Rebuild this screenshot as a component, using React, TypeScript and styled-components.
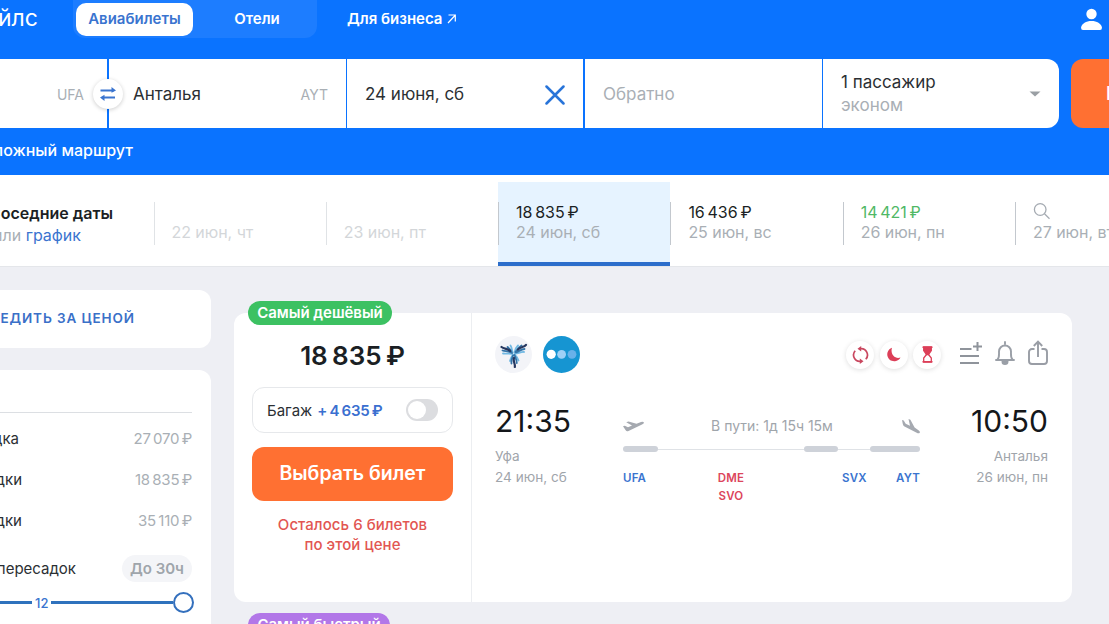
import * as React from 'react'
import styled, { createGlobalStyle } from 'styled-components'

const GlobalStyle = createGlobalStyle`
  * {
    box-sizing: border-box;
  }
  html, body, #root {
    margin: 0;
    height: 100%;
  }
  body {
    overflow: hidden;
    background: #eeeff4;
    color: #1b1f24;
    font-family: Inter, 'Noto Sans', sans-serif;
    font-size: 16px;
  }
`

const Page = styled.div`
  width: 1109px;
  height: 624px;
  overflow: hidden;
`

const Header = styled.header`
  height: 175px;
  background: #0a73ff;
  color: #fff;
`

const TopBar = styled.div`
  display: flex;
  align-items: flex-start;
  height: 59px;
  padding-right: 7px;
`

const Brand = styled.div`
  display: flex;
  justify-content: flex-end;
  width: 38px;
  margin-right: 35px;
  padding-top: 3px;
  font-size: 23px;
  line-height: 30px;
`

const Tabs = styled.nav`
  display: flex;
  width: 244px;
  height: 38px;
  padding: 3px;
  border-radius: 0 0 12px 12px;
  background: #1d7dff;
`

const Tab = styled.div<{ $active?: boolean }>`
  flex: none;
  width: ${({ $active }) => ($active ? '117px' : '128px')};
  height: 33px;
  border-radius: 10px;
  background: ${({ $active }) => ($active ? '#fff' : 'transparent')};
  color: ${({ $active }) => ($active ? '#3a74cf' : '#fff')};
  font-size: 15px;
  font-weight: 600;
  line-height: 31px;
  text-align: center;
`

const BusinessLink = styled.div`
  display: flex;
  align-items: center;
  gap: 4px;
  margin: 3px auto 0 30px;
  font-size: 15px;
  font-weight: 600;
  line-height: 31px;
`

const UserIcon = styled.svg`
  margin-top: 8px;
`

const SearchForm = styled.div`
  display: flex;
  height: 69px;
`

const Field = styled.div<{ $width: number, $gap?: number, $last?: boolean }>`
  display: flex;
  flex: none;
  align-items: center;
  justify-content: space-between;
  width: ${({ $width }) => $width}px;
  margin-right: ${({ $gap = 2 }) => $gap}px;
  padding: 2px 18px 0;
  border-radius: ${({ $last }) => ($last ? '0 12px 12px 0' : '0')};
  background: #fff;
  color: #2b2f33;
  font-size: 17px;
  line-height: 23px;
`

const OriginField = styled(Field)`
  position: relative;
  justify-content: flex-end;
  padding-right: 23px;
`

const DestinationField = styled(Field)`
  padding-left: 24px;
`

const PassengersField = styled(Field)`
  padding-top: 0;
`

const Muted = styled.span`
  color: #a9afb5;
`

const AirportHint = styled.span`
  color: #a9afb5;
  font-size: 14px;
`

// sits on the border between origin and destination
const SwapButton = styled.div`
  position: absolute;
  top: 20px;
  right: -16px;
  z-index: 1;
  display: flex;
  align-items: center;
  justify-content: center;
  width: 30px;
  height: 30px;
  border-radius: 50%;
  background: #fff;
  box-shadow: 0 1px 4px rgba(0, 0, 0, 0.2);
`

const SearchButton = styled.div`
  flex: none;
  width: 160px;
  padding-left: 35px;
  border-radius: 12px;
  background: #ff7032;
  font-size: 19px;
  font-weight: 600;
  line-height: 69px;
  white-space: nowrap;
`

const MultiRoute = styled.div`
  display: flex;
  justify-content: flex-end;
  width: 133px;
  padding-top: 11px;
  font-size: 16px;
  font-weight: 500;
  line-height: 22px;
  white-space: nowrap;
`

const DatesBar = styled.div`
  display: flex;
  height: 92px;
  padding-top: 7px;
  border-bottom: 1px solid #e4e6ea;
  background: #fff;
`

const DatesTitle = styled.div`
  display: flex;
  flex: none;
  flex-direction: column;
  width: 153.5px;
  padding-top: 20px;
  line-height: 22px;
  white-space: nowrap;
`

const ClippedLine = styled.div<{ $width: number }>`
  display: flex;
  justify-content: flex-end;
  width: ${({ $width }) => $width}px;
  font-size: 16px;
  white-space: pre;
`

const Strong = styled.span`
  font-weight: 600;
`

const LinkText = styled.span`
  color: #3a74cf;
`

const DateCell = styled.div<{ $selected?: boolean, $faded?: boolean }>`
  display: flex;
  flex: none;
  width: 172.3px;
  height: 84px;
  padding-top: 20px;
  border-bottom: 4px solid ${({ $selected }) => ($selected ? '#2c6ecb' : 'transparent')};
  background: ${({ $selected }) => ($selected ? '#e6f3ff' : 'transparent')};
  opacity: ${({ $faded }) => ($faded ? 0.5 : 1)};
`

const DateBody = styled.div`
  height: 43px;
  padding-left: 17px;
  border-left: 1px solid #c3c8ce;
  font-size: 16px;
  line-height: 20px;
  letter-spacing: -0.05px;
  white-space: nowrap;
`

const DatePrice = styled.div<{ $best?: boolean }>`
  height: 20px;
  color: ${({ $best }) => ($best ? '#4fb865' : '#1b1f24')};
`

const Content = styled.div`
  display: flex;
  gap: 23px;
`

const Sidebar = styled.aside`
  flex: none;
  width: 211px;
  padding-top: 23px;
`

const WatchPrice = styled.div`
  height: 58px;
  margin-bottom: 22px;
  padding-top: 20px;
  border-radius: 0 12px 12px 0;
  background: #fff;
  color: #3a70c8;
  font-weight: 600;
  letter-spacing: 0.9px;
`

const WatchPriceLabel = styled(ClippedLine)`
  font-size: 13.5px;
`

const Filters = styled.div`
  height: 280px;
  padding: 42px 19px 0 0;
  border-radius: 0 12px 0 0;
  background: #fff;
`

const FilterRows = styled.div`
  padding-top: 5px;
  border-top: 1px solid #dcdfe3;
`

const FilterRow = styled.div<{ $height?: number }>`
  display: flex;
  align-items: center;
  justify-content: space-between;
  height: ${({ $height = 41.2 }) => $height}px;
  color: #2b2f33;
  font-size: 15px;
`

const FilterLabel = styled(ClippedLine)`
  font-size: 15px;
`

const FilterPrice = styled(Muted)`
  letter-spacing: -0.25px;
`

const DurationChip = styled.span`
  padding: 0 8px;
  border-radius: 14px;
  background: #f4f5f8;
  color: #9fa5ab;
  font-weight: 600;
  line-height: 27px;
`

const Slider = styled.div`
  display: flex;
  align-items: center;
  gap: 3px;
  width: 194px;
  height: 22px;
  margin-top: -3px;
  color: #3a74cf;
  font-size: 13px;
  font-weight: 500;
`

const SliderTrack = styled.div<{ $width?: number }>`
  flex: ${({ $width }) => ($width ? 'none' : 1)};
  width: ${({ $width }) => ($width ? `${$width}px` : 'auto')};
  height: 3px;
  background: #2f72bd;
`

const SliderKnob = styled.div`
  width: 21px;
  height: 21px;
  margin-left: -3px;
  border: 2px solid #3470bd;
  border-radius: 50%;
  background: #fff;
`

const Tickets = styled.main`
  width: 838px;
  padding-top: 34px;
`

const Badge = styled.div<{ $color: string, $width: number }>`
  position: relative;
  z-index: 1;
  width: ${({ $width }) => $width}px;
  height: 24px;
  margin: 0 0 -12px 14px;
  border-radius: 12px;
  background: ${({ $color }) => $color};
  color: #fff;
  font-size: 15px;
  font-weight: 600;
  line-height: 23px;
  letter-spacing: -0.05px;
  text-align: center;
  white-space: nowrap;
`

const Ticket = styled.div`
  display: flex;
  height: 289px;
  margin-bottom: 11px;
  border-radius: 12px;
  background: #fff;
`

const TicketOffer = styled.div`
  display: flex;
  flex: none;
  flex-direction: column;
  width: 238px;
  padding: 25px 18px 0;
  border-right: 1px solid #eceef1;
`

const Price = styled.div`
  height: 36px;
  font-size: 26px;
  font-weight: 600;
  line-height: 36px;
  text-align: center;
`

const Baggage = styled.div`
  display: flex;
  align-items: center;
  height: 46px;
  margin: 13px 0 14px;
  padding: 0 14px;
  border: 1px solid #e6e8eb;
  border-radius: 12px;
  color: #2b2f33;
  font-size: 15px;
  white-space: nowrap;
`

const BaggagePrice = styled.span`
  margin-left: 5px;
  color: #3a6fd0;
  font-weight: 600;
  letter-spacing: -0.2px;
`

const Toggle = styled.div`
  width: 32px;
  height: 22px;
  margin-left: auto;
  padding: 2px;
  border-radius: 11px;
  background: #dcdde0;

  &::before {
    display: block;
    width: 18px;
    height: 18px;
    border-radius: 50%;
    background: #fff;
    content: '';
  }
`

const SelectButton = styled.div`
  height: 54px;
  border-radius: 12px;
  background: #ff7032;
  color: #fff;
  font-size: 19.5px;
  font-weight: 600;
  line-height: 53px;
  text-align: center;
`

const SeatsLeft = styled.div`
  margin-top: 14px;
  color: #e25652;
  font-size: 15px;
  font-weight: 500;
  line-height: 20px;
  letter-spacing: 0.05px;
  text-align: center;
`

const TicketBody = styled.div`
  flex: 1;
  padding: 23px 24px 0 23px;
`

const TicketTop = styled.div`
  display: flex;
  align-items: center;
  justify-content: space-between;
  height: 37px;
`

const IconRow = styled.div<{ $gap: number }>`
  display: flex;
  align-items: center;
  gap: ${({ $gap }) => $gap}px;
`

const ActionIcons = styled(IconRow)`
  padding-bottom: 3px;
`

const Tag = styled.div`
  display: flex;
  align-items: center;
  justify-content: center;
  width: 28px;
  height: 28px;
  border-radius: 50%;
  background: #fff;
  box-shadow: 0 1px 5px rgba(0, 0, 0, 0.13);
`

const Segment = styled.div`
  display: flex;
  margin-top: 27px;
`

const Endpoint = styled.div<{ $right?: boolean }>`
  flex: none;
  width: 128px;
  color: #9fa5ab;
  font-size: 13.6px;
  line-height: 21px;
  text-align: ${({ $right }) => ($right ? 'right' : 'left')};
`

const Time = styled.div`
  height: 46px;
  color: #14171a;
  font-size: 30px;
  line-height: 42px;
`

const Route = styled.div`
  flex: 1;
  padding-top: 16px;
`

const RouteInfo = styled.div`
  display: flex;
  align-items: center;
  justify-content: space-between;
  height: 20px;
  color: #9fa5ab;
  font-size: 14px;
`

const Duration = styled.span`
  margin: -2px 2px 0 0;
`

const RouteLine = styled.div`
  display: flex;
  align-items: center;
  height: 6px;
  margin: 10px 0 17px;
`

const Leg = styled.div<{ $width: number }>`
  width: ${({ $width }) => $width}px;
  height: 6px;
  border-radius: 3px;
  background: #ced2d9;
`

const Layover = styled.div<{ $width: number }>`
  width: ${({ $width }) => $width}px;
  height: 1px;
  background: #dfe2e6;
`

const Airports = styled.div`
  display: flex;
  color: #3a74cf;
  font-size: 11.5px;
  font-weight: 600;
  line-height: 18px;
  letter-spacing: 0.2px;
`

const Airport = styled.div<{ $width: number, $changed?: boolean, $align?: string }>`
  flex: none;
  width: ${({ $width }) => $width}px;
  color: ${({ $changed }) => ($changed ? '#dc465c' : 'inherit')};
  text-align: ${({ $align = 'left' }) => $align};
`

interface DateOption {
  date: string,
  price?: string,
  selected?: boolean,
  best?: boolean,
  faded?: boolean,
  search?: boolean,
}

const DATES: DateOption[] = [
  { date: '22 июн, чт', faded: true },
  { date: '23 июн, пт', faded: true },
  { date: '24 июн, сб', price: '18\u2009835\u2009₽', selected: true },
  { date: '25 июн, вс', price: '16\u2009436\u2009₽' },
  { date: '26 июн, пн', price: '14\u2009421\u2009₽', best: true },
  { date: '27 июн, вт', search: true },
]

const STOPS = [
  { label: '1 пересадка', width: 19, price: '27\u2009070\u2009₽' },
  { label: '2 пересадки', width: 22, price: '18\u2009835\u2009₽' },
  { label: '3 пересадки', width: 22, price: '35\u2009110\u2009₽' },
]

const UtairLogo = () => (
  <svg width="37" height="37" viewBox="0 0 37 37">
    <circle cx="18.5" cy="18.5" r="18.5" fill="#f3f4f8" />
    <g fill="none" strokeLinecap="round">
      <path d="M8 17.5c3 .5 6-.5 9 .5M15.500 9.500c1.500 2 1.500 4 2 7M23 9.500c-2 2-3 4-3.500 7M29 16c-3-.5-5 1.500-9 1.500M15 25c.5-3 1.500-4 3-6.500M23.500 24.500c-1-3-2-4-4-6" stroke="#72b9e3" strokeWidth="1.800" />
      <path d="M7.500 14.500c3 1 6 .5 9.500 2.500M12.500 11c2 1.500 3 3 4 5M26.500 9.500c-3 1.500-4.500 4-6 6.500M29.500 13c-3 0-5 2-8.500 3.500M16.500 27.500c-.5-3 .5-5 1.500-8M21.800 27c0-3-1.300-5-2.300-8" stroke="#3474a8" strokeWidth="1.800" />
      <path d="M6.500 11c3 2.500 5 .5 8.500 4M31 8.800c-2 2.700-5 1.700-8 4.700M19.800 31c.7-3.500-2-5-.8-9" stroke="#26375f" strokeWidth="2.200" />
    </g>
  </svg>
)

const DotsLogo = () => (
  <svg width="37" height="37" viewBox="0 0 37 37">
    <circle cx="18.5" cy="18.5" r="18.5" fill="#1695d2" />
    <circle cx="8.2" cy="18.3" r="4.6" fill="#fff" />
    <circle cx="18.6" cy="18.3" r="4.4" fill="#9ed0f6" />
    <circle cx="29" cy="18.3" r="4.4" fill="#68b1e9" />
  </svg>
)

const SwapIcon = () => (
  <svg width="16" height="14" viewBox="0 0 16 14" fill="none" stroke="#3a74cf" strokeWidth="1.8">
    <path d="M.5 3.500h13M15 10.500H3" />
    <path d="M11.500 0 16 3.500l-4.500 2.200zM4.500 7.800 0 10.500 4.500 14z" fill="#3a74cf" stroke="none" />
  </svg>
)

const TransferIcon = () => (
  <svg width="17" height="18" viewBox="0 0 17 18" fill="none" stroke="#c9475f" strokeWidth="1.7">
    <path d="M3.200 4.800A6.300 6.300 0 0 0 8.500 15.300M13.800 13.200A6.300 6.300 0 0 0 8.500 2.700" />
    <path d="M9.200 0v5.600L5.500 2.800zM7.800 12.400V18l3.700-2.800z" fill="#c9475f" stroke="none" />
  </svg>
)

const MoonIcon = () => (
  <svg width="14" height="15" viewBox="0 0 14 15">
    <path d="M5 .7a7 7 0 1 0 8.500 9.800C8 12.500 3 7 5 .7z" fill="#dc3f58" />
  </svg>
)

const HourglassIcon = () => (
  <svg width="11" height="17" viewBox="0 0 11 17" fill="none" stroke="#dc3f58" strokeWidth="1.3">
    <path d="M.5 1.200h10M.5 15.800h10" strokeWidth="1.6" />
    <path d="M1.700 1h7.600v3.500L6.500 8.500h-2l-2.800-4z" fill="#dc3f58" />
    <path d="M4.500 8.500 1.700 12v4h7.600v-4L6.500 8.500" />
  </svg>
)

const ListPlusIcon = () => (
  <svg width="22" height="24" viewBox="0 0 22 24" fill="none" stroke="#8f949b" strokeWidth="2">
    <path d="M0 8h11.500M0 15h19M0 22h19" />
    <path d="M17.500 1v9M13 5.500h9" />
  </svg>
)

const BellIcon = () => (
  <svg width="20" height="24" viewBox="0 0 20 24" fill="none" stroke="#9a9fa7" strokeWidth="1.9" strokeLinecap="round">
    <path d="M10 1v2M1 19h18M2.500 18.500c2-2 1.500-4 1.500-8a6 6 0 0 1 12 0c0 4-.5 6 1.500 8" />
    <path d="M7.500 21a2.500 2 0 0 0 5 0z" fill="#9a9fc0" />
  </svg>
)

const ShareIcon = () => (
  <svg width="20" height="26" viewBox="0 0 20 26" fill="none" stroke="#999da5" strokeWidth="1.9">
    <path d="M6.500 9H4a3 3 0 0 0-3 3v9a3 3 0 0 0 3 3h12a3 3 0 0 0 3-3v-9a3 3 0 0 0-3-3h-2.500M10 17V2M5.800 6 10 1.700 14.200 6" />
  </svg>
)

const TakeoffIcon = () => (
  <svg width="21" height="11" viewBox="0 0 21 11">
    <path d="M0 5.200 1.800 4.800 5 6.200 9 4.600 3.200 1.300 5.500.6 13.500 2.800 18 1q2.500-.6 3 .7-.1 1.200-2.500 2L5.500 10Q3.500 10.700 2.700 9.200z" fill="#a5a9b0" />
  </svg>
)

const LandingIcon = () => (
  <svg width="18" height="15" viewBox="0 0 18 15">
    <path d="M0 1 1.700 1.500 3.700 4.700 8 6.700 6.500 0 8.400.8 12.600 8.500 16.500 11.300q2 1.500 1.200 2.500-1 1-3 0L2.500 7.500Q1 6.700.8 5z" fill="#a5a9b0" />
  </svg>
)

const Dates: React.FunctionComponent = () => (
  <DatesBar>
    <DatesTitle>
      <ClippedLine $width={113}><Strong>Соседние даты</Strong></ClippedLine>
      <ClippedLine $width={81}><Muted>или </Muted><LinkText>график</LinkText></ClippedLine>
    </DatesTitle>
    {DATES.map(({ date, price, selected, best, faded, search }) => (
      <DateCell key={date} $selected={selected} $faded={faded}>
        <DateBody>
          <DatePrice $best={best}>
            {price}
            {search && (
              <svg width="18" height="18" viewBox="0 0 18 18" fill="none" stroke="#a5abb2" strokeWidth="1.3">
                <circle cx="7.2" cy="7.5" r="5.8" />
                <path d="m11.500 11.800 5 5" />
              </svg>
            )}
          </DatePrice>
          <Muted>{date}</Muted>
        </DateBody>
      </DateCell>
    ))}
  </DatesBar>
)

const Search: React.FunctionComponent = () => (
  <SearchForm>
    <OriginField $width={107}>
      <AirportHint>UFA</AirportHint>
      <SwapButton><SwapIcon /></SwapButton>
    </OriginField>
    <DestinationField $width={237} $gap={1}>
      Анталья
      <AirportHint>AYT</AirportHint>
    </DestinationField>
    <Field $width={236}>
      24 июня, сб
      <svg width="20" height="20" viewBox="0 0 20 20" fill="none" stroke="#2874d9" strokeWidth="2.5" strokeLinecap="round">
        <path d="m1.500 1.500 17 17M18.500 1.500l-17 17" />
      </svg>
    </Field>
    <Field $width={237} $gap={1}><Muted>Обратно</Muted></Field>
    <PassengersField $width={236} $gap={12} $last>
      <div>
        <div>1 пассажир</div>
        <Muted>эконом</Muted>
      </div>
      <svg width="12" height="6" viewBox="0 0 12 6"><path d="M.5.5h11L6 5.500z" fill="#9a9fa4" /></svg>
    </PassengersField>
    <SearchButton>Найти билеты</SearchButton>
  </SearchForm>
)

const App: React.FunctionComponent = () => (
  <Page>
    <GlobalStyle />
    <Header>
      <TopBar>
        <Brand>авиасейлс</Brand>
        <Tabs>
          <Tab $active>Авиабилеты</Tab>
          <Tab>Отели</Tab>
        </Tabs>
        <BusinessLink>
          Для бизнеса
          <svg width="9" height="10" viewBox="0 0 9 10" fill="none" stroke="#fff" strokeWidth="1.2">
            <path d="M1 9 8 1.500M1.500 1H8.300V7.500" />
          </svg>
        </BusinessLink>
        <UserIcon width="21" height="23" viewBox="0 0 21 23" fill="#fff">
          <ellipse cx="10.5" cy="6" rx="5.2" ry="5.3" />
          <path d="M0 19.500C1 15.500 5 13 10.500 13S20 15.500 21 19.500q0 2.500-2 2.500H2q-2 0-2-2.500z" />
        </UserIcon>
      </TopBar>
      <Search />
      <MultiRoute>Сложный маршрут</MultiRoute>
    </Header>
    <Dates />
    <Content>
      <Sidebar>
        <WatchPrice>
          <WatchPriceLabel $width={135}>СЛЕДИТЬ ЗА ЦЕНОЙ</WatchPriceLabel>
        </WatchPrice>
        <Filters>
          <FilterRows>
            {STOPS.map(({ label, width, price }) => (
              <FilterRow key={label}>
                <FilterLabel $width={width}>{label}</FilterLabel>
                <FilterPrice>{price}</FilterPrice>
              </FilterRow>
            ))}
          </FilterRows>
          <FilterRow $height={53}>
            <FilterLabel $width={76}>Длительность пересадок</FilterLabel>
            <DurationChip>До 30ч</DurationChip>
          </FilterRow>
          <Slider>
            <SliderTrack $width={32} />
            12
            <SliderTrack />
            <SliderKnob />
          </Slider>
        </Filters>
      </Sidebar>
      <Tickets>
        <Badge $color="#3cc162" $width={144}>Самый дешёвый</Badge>
        <Ticket>
          <TicketOffer>
            <Price>18{'\u2009'}835{'\u2009'}₽</Price>
            <Baggage>
              Багаж
              <BaggagePrice>+{'\u2009'}4{'\u2009'}635{'\u2009'}₽</BaggagePrice>
              <Toggle />
            </Baggage>
            <SelectButton>Выбрать билет</SelectButton>
            <SeatsLeft>Осталось 6 билетов<br />по этой цене</SeatsLeft>
          </TicketOffer>
          <TicketBody>
            <TicketTop>
              <IconRow $gap={11}>
                <UtairLogo />
                <DotsLogo />
              </IconRow>
              <IconRow $gap={19}>
                <IconRow $gap={5.5}>
                  <Tag><TransferIcon /></Tag>
                  <Tag><MoonIcon /></Tag>
                  <Tag><HourglassIcon /></Tag>
                </IconRow>
                <ActionIcons $gap={13}>
                  <ListPlusIcon />
                  <BellIcon />
                  <ShareIcon />
                </ActionIcons>
              </IconRow>
            </TicketTop>
            <Segment>
              <Endpoint>
                <Time>21:35</Time>
                <div>Уфа</div>
                <div>24 июн, сб</div>
              </Endpoint>
              <Route>
                <RouteInfo>
                  <TakeoffIcon />
                  <Duration>В пути: 1д 15ч 15м</Duration>
                  <LandingIcon />
                </RouteInfo>
                <RouteLine>
                  <Leg $width={35} />
                  <Layover $width={146} />
                  <Leg $width={34} />
                  <Layover $width={32} />
                  <Leg $width={50} />
                </RouteLine>
                <Airports>
                  <Airport $width={94}>UFA</Airport>
                  <Airport $width={28} $changed $align="center">DME<br />SVO</Airport>
                  <Airport $width={97} />
                  <Airport $width={28}>SVX</Airport>
                  <Airport $width={50} $align="right">AYT</Airport>
                </Airports>
              </Route>
              <Endpoint $right>
                <Time>10:50</Time>
                <div>Анталья</div>
                <div>26 июн, пн</div>
              </Endpoint>
            </Segment>
          </TicketBody>
        </Ticket>
        <Badge $color="#b277e8" $width={142}>Самый быстрый</Badge>
      </Tickets>
    </Content>
  </Page>
)

export default App
